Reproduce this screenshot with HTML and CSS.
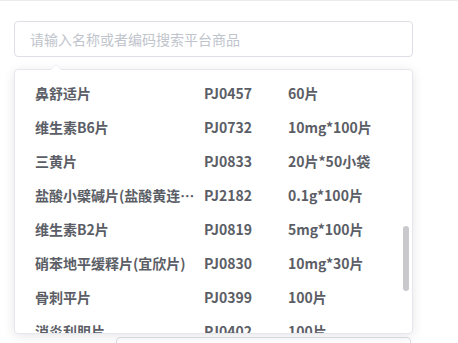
FILE: index.html
```html
<!DOCTYPE html>
<html lang="zh-CN">
<head>
  <meta charset="UTF-8" />
  <title>搜索平台商品</title>
  <link rel="stylesheet" href="styles.css">
</head>
<body>
  <div class="page">
    <div class="search">
      <input class="search-input" type="text" placeholder="请输入名称或者编码搜索平台商品" />

      <div class="dropdown">
        <div class="dropdown-arrow"></div>
        <ul class="list">
          <li class="item"><span class="name">鼻舒适片</span><span class="code">PJ0457</span><span class="spec">60片</span></li>
          <li class="item"><span class="name">维生素B6片</span><span class="code">PJ0732</span><span class="spec">10mg*100片</span></li>
          <li class="item"><span class="name">三黄片</span><span class="code">PJ0833</span><span class="spec">20片*50小袋</span></li>
          <li class="item"><span class="name">盐酸小檗碱片(盐酸黄连素片)</span><span class="code">PJ2182</span><span class="spec">0.1g*100片</span></li>
          <li class="item"><span class="name">维生素B2片</span><span class="code">PJ0819</span><span class="spec">5mg*100片</span></li>
          <li class="item"><span class="name">硝苯地平缓释片(宜欣片)</span><span class="code">PJ0830</span><span class="spec">10mg*30片</span></li>
          <li class="item"><span class="name">骨刺平片</span><span class="code">PJ0399</span><span class="spec">100片</span></li>
          <li class="item"><span class="name">消炎利胆片</span><span class="code">PJ0402</span><span class="spec">100片</span></li>
        </ul>
        <div class="scroll-thumb"></div>
      </div>
    </div>

    <div class="next-field"></div>
  </div>
</body>
</html>
```

FILE: styles.css
```css
html, body {
  margin: 0;
  padding: 0;
  height: 100%;
  overflow: hidden;
  background: #fff;
  font-family: "Noto Sans CJK SC", "Noto Sans", sans-serif;
}

.page {
  height: 100%;
  box-sizing: border-box;
  overflow: hidden;
  border-top: 1px solid #ececef;
  padding: 20px 0 0 14px;
}

.search {
  position: relative;
  width: 399px;
}

.search-input {
  display: block;
  box-sizing: border-box;
  width: 100%;
  height: 36px;
  padding: 0 15px;
  border: 1px solid #dcdfe6;
  border-radius: 4px;
  font-family: inherit;
  font-size: 14px;
  color: #606266;
  outline: none;
}

.search-input::placeholder {
  color: #c0c4cc;
}

.dropdown {
  position: absolute;
  top: 48px;
  left: 0;
  z-index: 10;
  box-sizing: border-box;
  width: 399px;
  height: 265px;
  background: #fff;
  border: 1px solid #e4e7ed;
  border-radius: 4px;
  box-shadow: 0 2px 12px 0 rgba(0, 0, 0, 0.1);
}

.dropdown-arrow {
  position: absolute;
  top: -6px;
  left: 35px;
  width: 0;
  height: 0;
  border: 6px solid transparent;
  border-top-width: 0;
  border-bottom-color: #ebeef5;
}

.dropdown-arrow::after {
  content: "";
  position: absolute;
  top: 1px;
  left: -6px;
  border: 6px solid transparent;
  border-top-width: 0;
  border-bottom-color: #fff;
}

.list {
  list-style: none;
  margin: 0;
  padding: 6px 0 0;
  height: 100%;
  box-sizing: border-box;
  overflow: hidden;
  border-radius: 4px;
}

.item {
  display: flex;
  height: 34px;
  line-height: 34px;
  padding: 0 20px;
  font-size: 14px;
  font-weight: bold;
  color: #5b5e66;
  white-space: nowrap;
}

.name {
  width: 163px;
  margin-right: 6px;
  overflow: hidden;
  text-overflow: ellipsis;
}

.code {
  width: 84px;
}

.spec {
  flex: 1;
}

.scroll-thumb {
  position: absolute;
  right: 3px;
  top: 156px;
  width: 6px;
  height: 65px;
  border-radius: 3px;
  background: #c9c9cd;
}

.next-field {
  box-sizing: border-box;
  margin: 280px 0 0 102px;
  width: 295px;
  height: 36px;
  border: 1px solid #dcdfe6;
  border-radius: 4px;
}
```
